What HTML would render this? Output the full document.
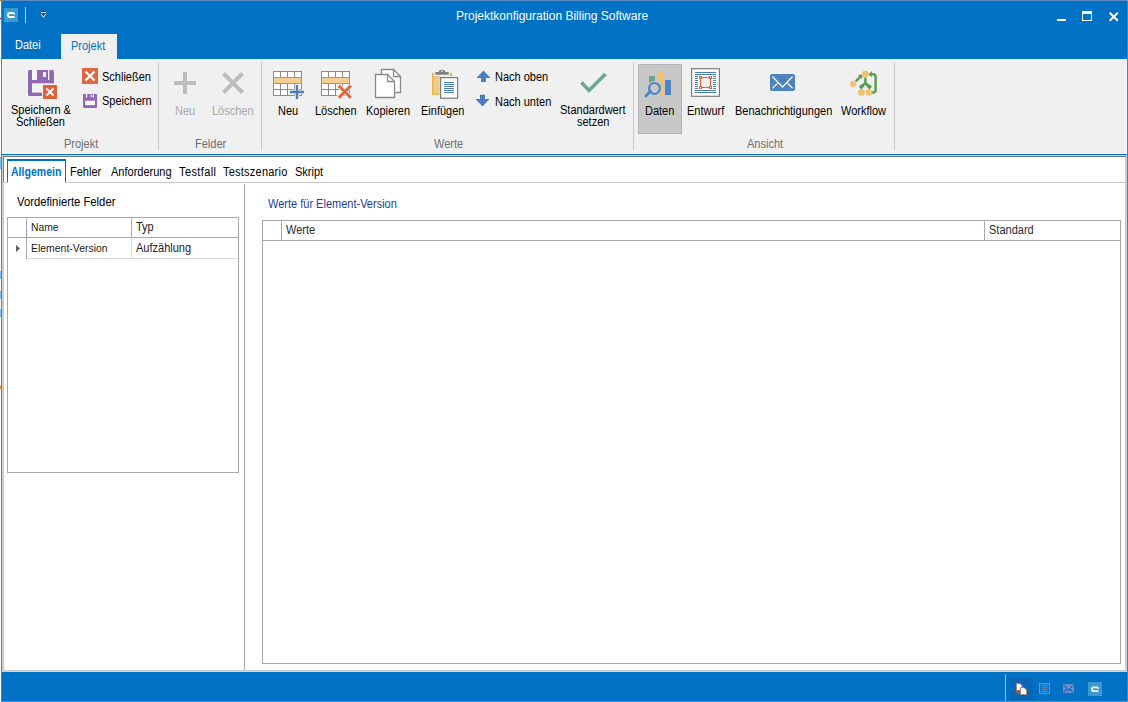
<!DOCTYPE html>
<html><head><meta charset="utf-8">
<style>
html,body{margin:0;padding:0;width:1128px;height:702px;overflow:hidden;background:#fff;}
body{position:relative;font-family:"Liberation Sans",sans-serif;}
.a{position:absolute;}
.t{position:absolute;font-size:12px;line-height:13px;white-space:nowrap;color:#000;transform-origin:0 0;transform:scaleX(0.917);}
.g{color:#6d6d6d;}
.d{color:#a9a9a9;}
svg{position:absolute;overflow:visible;}
</style></head><body>
<!-- window frame -->
<div class="a" style="left:1px;top:0;width:1127px;height:1px;background:#5d8bc2"></div>
<div class="a" style="left:1px;top:1px;width:1px;height:700px;background:#4a80c0"></div>
<div class="a" style="left:1127px;top:1px;width:1px;height:700px;background:#4a80c0"></div>
<div class="a" style="left:1px;top:701px;width:1127px;height:1px;background:#5d8bc2"></div>
<div class="a" style="left:0;top:0;width:1px;height:1px;background:#d07a10"></div><div class="a" style="left:0;top:18px;width:1px;height:1px;background:#701010"></div><div class="a" style="left:0;top:19px;width:1px;height:6px;background:#c8f0f4"></div><div class="a" style="left:0;top:157px;width:1px;height:12px;background:#7cc0f8"></div><div class="a" style="left:0;top:271px;width:1px;height:8px;background:#7cc0f8"></div><div class="a" style="left:0;top:291px;width:1px;height:8px;background:#7cc0f8"></div><div class="a" style="left:0;top:309px;width:1px;height:8px;background:#7cc0f8"></div><div class="a" style="left:0;top:386px;width:1px;height:3px;background:#d88a30"></div>
<!-- title + tab bar -->
<div class="a" style="left:2px;top:1px;width:1125px;height:58px;background:#0072c6"></div>
<!-- app icon -->
<div class="a" style="left:4px;top:8px;width:14px;height:14px;background:#3a9bd2"></div>
<svg style="left:4px;top:8px" width="14" height="14"><path d="M10.2,6.6 Q10.2,5 8.8,5 L6,5 Q4,5 4,7 Q4,9 6,9 L10.6,9" fill="none" stroke="#fff" stroke-width="1.9"/></svg>
<div class="a" style="left:25px;top:7px;width:1px;height:16px;background:#cfc9c4"></div>
<svg style="left:40px;top:10px" width="8" height="10"><rect x="1" y="1" width="5" height="1" fill="#3a3a3a"/><rect x="1" y="2" width="5" height="1" fill="#f4f4f4"/><path d="M0.6,4 L6.4,4 L3.5,7.8 Z" fill="#f4f4f4"/><path d="M1.5,4 L5.5,4 L3.5,6.6 Z" fill="#3a3a3a"/></svg>
<div class="t" style="left:456px;top:9px;font-size:12px;line-height:14px;color:#fff;transform:none">Projektkonfiguration Billing Software</div>
<!-- window buttons -->
<div class="a" style="left:1057px;top:19px;width:9px;height:2px;background:#fff"></div>
<div class="a" style="left:1082px;top:11px;width:8px;height:6px;border:1px solid #fff;border-top:3px solid #fff"></div>
<svg style="left:1109px;top:12px" width="10" height="10"><path d="M0.7,0.7 L8.8,8.8 M8.8,0.7 L0.7,8.8" stroke="#fff" stroke-width="2"/></svg>
<!-- tabs -->
<div class="t" style="left:15px;top:39px;color:#fff">Datei</div>
<div class="a" style="left:61px;top:34px;width:56px;height:25px;background:#f0f0f0"></div>
<div class="t" style="left:71px;top:40px;color:#0072c6">Projekt</div>
<!-- ribbon -->
<div class="a" style="left:2px;top:59px;width:1125px;height:94px;background:#f0f0f0"></div>
<div class="a" style="left:2px;top:153px;width:1125px;height:1px;background:#fdfaf5"></div><div class="a" style="left:2px;top:59px;width:1px;height:95px;background:#faf7f2"></div><div class="a" style="left:1126px;top:59px;width:1px;height:95px;background:#faf7f2"></div>
<div class="a" style="left:2px;top:154px;width:1125px;height:1px;background:#0072c6"></div>
<!-- group separators -->
<div class="a" style="left:158px;top:62px;width:1px;height:88px;background:#c8c8c8"></div>
<div class="a" style="left:261px;top:62px;width:1px;height:88px;background:#c8c8c8"></div>
<div class="a" style="left:633px;top:62px;width:1px;height:88px;background:#c8c8c8"></div>
<div class="a" style="left:894px;top:62px;width:1px;height:88px;background:#c8c8c8"></div>
<!-- Projekt group -->
<svg style="left:24px;top:66px" width="36" height="36">
 <rect x="4" y="4" width="26" height="26" rx="1.5" fill="#9268b4"/>
 <rect x="8" y="3" width="5" height="11" fill="#f6f6f6"/>
 <rect x="24" y="3" width="1.3" height="11" fill="#f6f6f6"/>
 <rect x="19" y="6" width="3" height="5" fill="#f6f6f6"/>
 <rect x="8" y="17.3" width="23" height="9.3" fill="#f2f2f2"/>
 <rect x="18" y="18" width="16" height="16" fill="#f6f6f6"/>
 <rect x="19" y="19" width="14" height="14" fill="#e0603a"/>
 <path d="M22.5,22.5 L29.5,29.5 M29.5,22.5 L22.5,29.5" stroke="#f4f4f4" stroke-width="2.2"/>
</svg>
<div class="t" style="left:11px;top:104px">Speichern &amp;</div>
<div class="t" style="left:16px;top:116px">Schließen</div>
<svg style="left:82px;top:68px" width="16" height="16">
 <rect x="0" y="0" width="16" height="16" fill="#e2653d"/>
 <path d="M3.5,3.5 L12.5,12.5 M12.5,3.5 L3.5,12.5" stroke="#fff" stroke-width="2.4"/>
</svg>
<div class="t" style="left:102px;top:71px">Schließen</div>
<svg style="left:82px;top:93px" width="16" height="16">
 <rect x="1" y="1" width="14" height="14" rx="1" fill="#9268b4"/>
 <rect x="3.9" y="0.5" width="1.3" height="4.1" fill="#f6f6f6"/>
 <rect x="11" y="0.5" width="1" height="4.1" fill="#f6f6f6"/>
 <rect x="8.7" y="2" width="1.7" height="2" fill="#f6f6f6"/>
 <rect x="3.2" y="7.7" width="9.8" height="4.4" fill="#f6f6f6"/>
</svg>
<div class="t" style="left:102px;top:95px">Speichern</div>
<div class="t g" style="left:64px;top:138px">Projekt</div>
<!-- Felder group -->
<svg style="left:174px;top:72px" width="22" height="22"><path d="M11,0 V22 M0,11 H22" stroke="#bdbdbd" stroke-width="4"/></svg>
<div class="t d" style="left:175px;top:105px">Neu</div>
<svg style="left:222px;top:72px" width="22" height="22"><path d="M1.5,1.5 L20.5,20.5 M20.5,1.5 L1.5,20.5" stroke="#bdbdbd" stroke-width="4"/></svg>
<div class="t d" style="left:212px;top:105px">Löschen</div>
<div class="t g" style="left:195px;top:138px">Felder</div>
<!-- Werte group -->
<svg style="left:272px;top:70px" width="34" height="32">
 <rect x="1.5" y="1.5" width="28" height="24" fill="#fff" stroke="#8a8a8a" stroke-width="1"/>
 <path d="M8.5,1.5 V25.5 M15.5,1.5 V25.5 M22.5,1.5 V25.5 M1.5,13.5 H29.5 M1.5,19.5 H29.5" stroke="#8a8a8a" stroke-width="1"/>
 <rect x="1.5" y="7.5" width="28" height="6" fill="#f6cf92" stroke="#e08a1c" stroke-width="1"/>
 <path d="M25,14 V30 M17,22 H33" stroke="#f0f0f0" stroke-width="4.5"/>
 <path d="M25,15 V29 M18,22 H32" stroke="#4c7fbd" stroke-width="2.4"/>
</svg>
<div class="t" style="left:278px;top:105px">Neu</div>
<svg style="left:320px;top:70px" width="34" height="32">
 <rect x="1.5" y="1.5" width="28" height="24" fill="#fff" stroke="#8a8a8a" stroke-width="1"/>
 <path d="M8.5,1.5 V25.5 M15.5,1.5 V25.5 M22.5,1.5 V25.5 M1.5,13.5 H29.5 M1.5,19.5 H29.5" stroke="#8a8a8a" stroke-width="1"/>
 <rect x="1.5" y="7.5" width="28" height="6" fill="#f6cf92" stroke="#e08a1c" stroke-width="1"/>
 <path d="M18.5,15.5 L30.5,27.5 M30.5,15.5 L18.5,27.5" stroke="#f0f0f0" stroke-width="5"/>
 <path d="M18.8,15.8 L30.8,27.8 M30.8,15.8 L18.8,27.8" stroke="#e0643c" stroke-width="2.8"/>
</svg>
<div class="t" style="left:315px;top:105px">Löschen</div>
<svg style="left:374px;top:68px" width="30" height="32">
 <path d="M7.5,1.5 H19.5 L26.5,8.5 V24.5 H7.5 Z" fill="#fff" stroke="#8a8a8a" stroke-width="1.3"/>
 <path d="M19.5,1.5 V8.5 H26.5" fill="none" stroke="#8a8a8a" stroke-width="1.3"/>
 <path d="M1.5,6.5 H13.5 L20.5,13.5 V29.5 H1.5 Z" fill="#fff" stroke="#8a8a8a" stroke-width="1.3"/>
 <path d="M13.5,6.5 V13.5 H20.5" fill="none" stroke="#8a8a8a" stroke-width="1.3"/>
</svg>
<div class="t" style="left:366px;top:105px">Kopieren</div>
<svg style="left:428px;top:66px" width="34" height="36">
 <rect x="5.6" y="10" width="6" height="18" fill="#f0cb85"/>
 <rect x="4" y="7" width="1.7" height="22" fill="#eab24a"/>
 <rect x="4" y="27.6" width="7.5" height="1.3" fill="#eab24a"/>
 <rect x="5.6" y="10" width="6" height="1" fill="#eec070"/>
 <rect x="22" y="7" width="2.2" height="3" fill="#eab24a"/>
 <rect x="7" y="6" width="14" height="2.8" rx="1.4" fill="#808080"/>
 <ellipse cx="14" cy="5.6" rx="3.2" ry="1.9" fill="#808080"/>
 <rect x="13.2" y="4.6" width="1.6" height="1.2" fill="#f4f4f4"/>
 <rect x="12.6" y="11.6" width="17" height="20.6" fill="#fff" stroke="#808080" stroke-width="1.3"/>
 <path d="M16,16.5 H26 M16,18.5 H26 M16,20.5 H26 M16,22.5 H26 M16,24.5 H26 M16,26.5 H26" stroke="#4a7ebb" stroke-width="1"/>
</svg>
<div class="t" style="left:421px;top:105px">Einfügen</div>
<svg style="left:476px;top:70px" width="15" height="13"><path d="M7.5,0.4 L14.5,7.9 L9.9,7.9 L9.9,12 L5.1,12 L5.1,7.9 L0.4,7.9 Z" fill="#4a7fbf"/></svg>
<div class="t" style="left:495px;top:71px">Nach oben</div>
<svg style="left:475px;top:94px" width="15" height="13"><path d="M5,0.8 L10,0.8 L10,4.9 L14.5,4.9 L7.5,12.4 L0.4,4.9 L5,4.9 Z" fill="#4a7fbf"/></svg>
<div class="t" style="left:495px;top:96px">Nach unten</div>
<svg style="left:580px;top:72px" width="28" height="22"><path d="M1.5,10.5 L9,18.5 L25.5,2" fill="none" stroke="#6fa68f" stroke-width="3.6"/></svg>
<div class="t" style="left:560px;top:104px">Standardwert</div>
<div class="t" style="left:577px;top:116px">setzen</div>
<div class="t g" style="left:434px;top:138px">Werte</div>
<!-- Ansicht group -->
<div class="a" style="left:638px;top:64px;width:42px;height:68px;background:#c8c8c8;border:1px solid #b3b3b3"></div>
<svg style="left:640px;top:66px" width="36" height="36">
 <rect x="9" y="10" width="6" height="8" fill="#6fa68f"/>
 <rect x="17" y="5" width="6" height="24" fill="#eec272"/>
 <rect x="25" y="14" width="6" height="15" fill="#4f86c2"/>
 <path d="M5.8,30 L10.5,25.3" stroke="#cecece" stroke-width="5" stroke-linecap="round"/>
 <circle cx="14.5" cy="22.4" r="5.4" fill="#c8c8c8" stroke="#cecece" stroke-width="4.2"/>
 <circle cx="14.5" cy="22.4" r="5.4" fill="none" stroke="#4a86c5" stroke-width="2.2"/>
 <path d="M5.8,30 L10.5,25.3" stroke="#4a86c5" stroke-width="3" stroke-linecap="round"/>
</svg>
<div class="t" style="left:645px;top:105px">Daten</div>
<svg style="left:688px;top:66px" width="36" height="34">
 <rect x="3.6" y="2.7" width="27.8" height="27.6" fill="#fff" stroke="#7a7a7a" stroke-width="1.15"/>
 <path d="M7,6.5 H28 M7,8.5 H28 M7,24.5 H28 M7,26.5 H28 M7,10.5 H10 M25,10.5 H28 M7,12.5 H10 M25,12.5 H28 M7,14.5 H10 M25,14.5 H28 M7,16.5 H10 M25,16.5 H28 M7,18.5 H10 M25,18.5 H28 M7,20.5 H10 M25,20.5 H28 M7,22.5 H10 M25,22.5 H28" stroke="#4a7ebb" stroke-width="1"/>
 <rect x="12.5" y="11.5" width="10" height="10" fill="#f0f0f0" stroke="#e0603a" stroke-width="1.1"/>
 <g fill="#e0603a"><rect x="11" y="10" width="3" height="3"/><rect x="21" y="10" width="3" height="3"/><rect x="11" y="20" width="3" height="3"/><rect x="21" y="20" width="3" height="3"/></g>
 <g fill="#fff"><rect x="12" y="11" width="1" height="1"/><rect x="22" y="11" width="1" height="1"/><rect x="12" y="21" width="1" height="1"/><rect x="22" y="21" width="1" height="1"/></g>
</svg>
<div class="t" style="left:687px;top:105px">Entwurf</div>
<svg style="left:770px;top:74px" width="26" height="18">
 <rect x="0" y="0" width="25" height="17" rx="2" fill="#4f83bd"/>
 <path d="M2.5,2.5 L12.5,13 L22.5,2.5 M2.5,14.3 L8.2,8.6 M22.5,14.3 L16.8,8.6" fill="none" stroke="#f4f4f4" stroke-width="1.3"/>
</svg>
<div class="t" style="left:735px;top:105px">Benachrichtigungen</div>
<svg style="left:846px;top:66px" width="36" height="34">
 <path d="M9.7,15.3 L14.2,10.8" stroke="#5a9e4a" stroke-width="2.5"/>
 <path d="M11.8,8.8 L16.2,8.8 L16.2,13.2 Z" fill="#5a9e4a"/>
 <path d="M19.4,11.5 V17 L15.4,21 M19.4,17 L23.4,21" fill="none" stroke="#5a9e4a" stroke-width="2.5"/>
 <path d="M12.8,20.8 L15.4,18.2 L18,20.8 L15.4,23.4 Z M20.8,20.8 L23.4,18.2 L26,20.8 L23.4,23.4 Z" fill="#5a9e4a"/>
 <path d="M24,8.2 H28 L29.6,9.8 V25 L28,26.6 H25" fill="none" stroke="#5a9e4a" stroke-width="2.5"/>
 <path d="M22.6,8.2 L25.8,5 V11.4 Z" fill="#5a9e4a"/>
 <circle cx="19.4" cy="8.2" r="3.4" fill="#eec272"/>
 <circle cx="7" cy="17.9" r="3.1" fill="#eec272"/>
 <circle cx="15.4" cy="26.4" r="3.5" fill="#eec272"/>
 <circle cx="23" cy="26.4" r="3.3" fill="#eec272"/>
</svg>
<div class="t" style="left:841px;top:105px">Workflow</div>
<div class="t g" style="left:747px;top:138px">Ansicht</div>
<!-- content frame -->
<div class="a" style="left:2px;top:155px;width:1125px;height:1px;background:#d8d2cc"></div>
<div class="a" style="left:2px;top:155px;width:1px;height:517px;background:#d8d2cc"></div>
<div class="a" style="left:1126px;top:155px;width:1px;height:517px;background:#d8d2cc"></div>
<div class="a" style="left:2px;top:671px;width:1125px;height:1px;background:#d8d2cc"></div>
<div class="a" style="left:3px;top:156px;width:1123px;height:1px;background:#727272"></div>
<div class="a" style="left:3px;top:156px;width:1px;height:26px;background:#7a7a7a"></div>
<div class="a" style="left:3px;top:182px;width:1px;height:489px;background:#c8c8c8"></div>
<div class="a" style="left:1125px;top:157px;width:1px;height:514px;background:#c8c8c8"></div>
<div class="a" style="left:3px;top:670px;width:1123px;height:1px;background:#c8c8c8"></div>
<!-- tab strip -->
<div class="a" style="left:4px;top:182px;width:1121px;height:1px;background:#c8c8c8"></div>
<div class="a" style="left:7px;top:159px;width:57px;height:21px;background:#fff;border-left:1px solid #0072c6;border-right:1px solid #0072c6;border-top:2px solid #0072c6"></div><div class="a" style="left:8px;top:182px;width:57px;height:1px;background:#fff"></div>
<div class="t" style="left:11px;top:166px;color:#0072c6;font-weight:bold;font-size:12px;transform:scaleX(0.878)">Allgemein</div>
<div class="t" style="left:70px;top:166px">Fehler</div>
<div class="t" style="left:111px;top:166px">Anforderung</div>
<div class="t" style="left:179px;top:166px;letter-spacing:0.42px">Testfall</div>
<div class="t" style="left:223px;top:166px;letter-spacing:0.25px">Testszenario</div>
<div class="t" style="left:295px;top:166px">Skript</div>
<!-- splitter -->
<div class="a" style="left:244px;top:184px;width:1px;height:486px;background:#a9a9a9"></div>
<!-- left panel -->
<div class="t" style="left:17px;top:196px;font-size:12.3px">Vordefinierte Felder</div>
<div class="a" style="left:7px;top:217px;width:230px;height:254px;border:1px solid #a8a8a8;background:#fff"></div>
<div class="a" style="left:8px;top:237px;width:230px;height:1px;background:#a8a8a8"></div>
<div class="a" style="left:26px;top:218px;width:1px;height:19px;background:#a8a8a8"></div>
<div class="a" style="left:131px;top:218px;width:1px;height:19px;background:#a8a8a8"></div>
<div class="a" style="left:26px;top:238px;width:1px;height:21px;background:#a8a8a8"></div>
<div class="a" style="left:131px;top:238px;width:1px;height:20px;background:#dcdcdc"></div>
<div class="a" style="left:27px;top:258px;width:211px;height:1px;background:#dcdcdc"></div>
<div class="t" style="left:31px;top:221px;font-size:11.3px;color:#222">Name</div>
<div class="t" style="left:136px;top:221px;color:#222">Typ</div>
<svg style="left:16px;top:245px" width="5" height="8"><path d="M0,0 L4,3.5 L0,7 Z" fill="#606060"/></svg>
<div class="t" style="left:31px;top:242px;font-size:11.4px;color:#222">Element-Version</div>
<div class="t" style="left:136px;top:242px;color:#222">Aufzählung</div>
<!-- right panel -->
<div class="t" style="left:268px;top:198px;color:#1a3f8f">Werte für Element-Version</div>
<div class="a" style="left:262px;top:220px;width:857px;height:442px;border:1px solid #a8a8a8;background:#fff"></div>
<div class="a" style="left:263px;top:240px;width:857px;height:1px;background:#a8a8a8"></div>
<div class="a" style="left:281px;top:221px;width:1px;height:19px;background:#a8a8a8"></div>
<div class="a" style="left:984px;top:221px;width:1px;height:19px;background:#a8a8a8"></div>
<div class="t" style="left:286px;top:224px;color:#2a2a2a">Werte</div>
<div class="t" style="left:989px;top:224px;color:#2a2a2a">Standard</div>
<!-- status bar -->
<div class="a" style="left:2px;top:672px;width:1125px;height:29px;background:#0072c6"></div>
<div class="a" style="left:1005px;top:674px;width:1px;height:27px;background:#8cc0ee"></div>
<div class="a" style="left:1010px;top:678px;width:23px;height:22px;background:#0a66b4"></div>
<svg style="left:1015px;top:682px" width="14" height="14">
 <path d="M1.5,1.5 H5 L7,3.5 V8.5 H1.5 Z" fill="#fff" stroke="#a08c80" stroke-width="1"/>
 <path d="M5.5,5.5 H9 L11.5,8 V12.5 H5.5 Z" fill="#fff" stroke="#a08c80" stroke-width="1"/>
 <path d="M1.5,8 Q1.5,11 4.5,11.5" fill="none" stroke="#e05a2a" stroke-width="1.3"/>
</svg>
<svg style="left:1039px;top:683px" width="12" height="12">
 <rect x="0.5" y="0.5" width="10" height="10" fill="none" stroke="#9c8878" stroke-width="1"/>
 <path d="M2,2.5 H9 M2,8.5 H9" stroke="#4f8fd0" stroke-width="1"/>
 <g fill="#4f8fd0"><rect x="1.8" y="4" width="1" height="1"/><rect x="8.2" y="4" width="1" height="1"/><rect x="1.8" y="6" width="1" height="1"/><rect x="8.2" y="6" width="1" height="1"/></g>
 <path d="M3.8,3.6 L7.2,7 M7.2,3.6 L3.8,7" stroke="#e8602a" stroke-width="1.2"/>
</svg>
<svg style="left:1063px;top:684px" width="12" height="10">
 <rect x="0" y="0" width="11" height="9" rx="1.2" fill="#6f8fc2"/>
 <path d="M1.2,1.2 L5.5,6.5 L9.8,1.2 M1.2,8 L4.3,4.6 M9.8,8 L6.7,4.6" fill="none" stroke="#0c73cb" stroke-width="1.2"/>
</svg>
<div class="a" style="left:1088px;top:682px;width:14px;height:14px;background:#3a9bd2"></div>
<svg style="left:1088px;top:682px" width="14" height="14"><path d="M10.1,6.7 Q10.1,5.3 8.8,5.3 L6,5.3 Q3.9,5.3 3.9,7.25 Q3.9,9.2 6,9.2 L10.4,9.2" fill="none" stroke="#fff" stroke-width="1.75"/></svg>
</body></html>
